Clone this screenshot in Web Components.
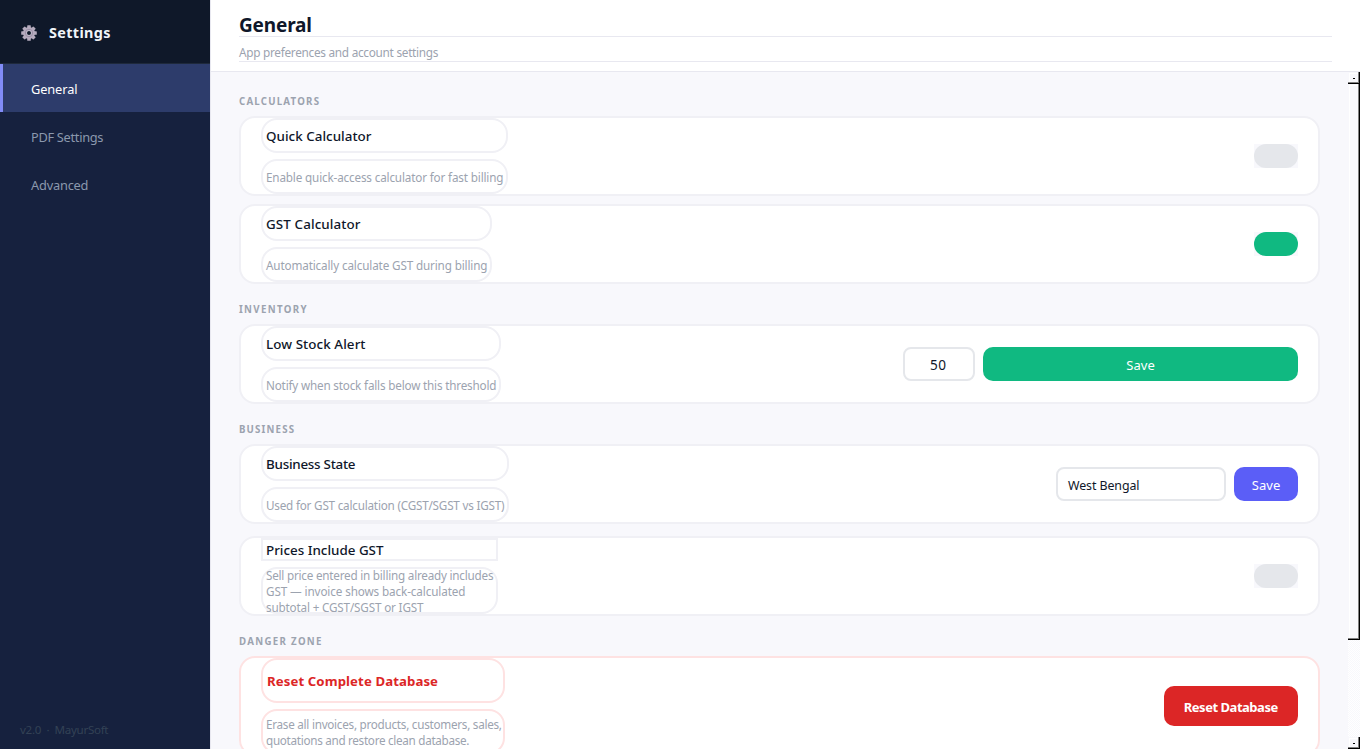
<!DOCTYPE html>
<html lang="en">
<head>
<meta charset="UTF-8">
<title>Settings</title>
<style>
  html, body { margin: 0; height: 100%; overflow: hidden; }
  body { font-family: "Noto Sans", "Open Sans", sans-serif; color: #0f172a; background: #f8f8fc; }
  settings-app { height: 749px; }
</style>
</head>
<body>
<settings-app></settings-app>

<script>
// Text run spaced out to a given advance width
class FitText extends HTMLElement {
  connectedCallback() {
    this.attachShadow({ mode: 'open' });
    this.shadowRoot.innerHTML = `
      <style>
        :host { display: block; white-space: nowrap; }
        span { display: inline-block; }
      </style>
      <span><slot></slot></span>
    `;
    const span = this.shadowRoot.querySelector('span');
    const width = Number(this.getAttribute('width'));
    const count = this.textContent.length;
    if (width && count > 1) {
      const natural = span.getBoundingClientRect().width;
      const gap = (width - natural) / (count - 1);
      span.style.letterSpacing = gap + 'px';
      span.style.marginRight = -gap + 'px';
    }
  }
}

class GearIcon extends HTMLElement {
  connectedCallback() {
    this.attachShadow({ mode: 'open' });
    this.shadowRoot.innerHTML = `
      <style>:host { display: block; width: 16px; height: 16px; } svg { display: block; }</style>
      <svg width="16" height="16" viewBox="0 0 16 16">
        <g fill="#b5abbd">
          <rect x="6.2" y="0.2" width="3.6" height="15.6" rx="0.6"/>
          <rect x="6.2" y="0.2" width="3.6" height="15.6" rx="0.6" transform="rotate(45 8 8)"/>
          <rect x="6.2" y="0.2" width="3.6" height="15.6" rx="0.6" transform="rotate(90 8 8)"/>
          <rect x="6.2" y="0.2" width="3.6" height="15.6" rx="0.6" transform="rotate(135 8 8)"/>
          <circle cx="8" cy="8" r="6"/>
        </g>
        <circle cx="8" cy="8" r="3.7" fill="none" stroke="#978aa3" stroke-width="0.9"/>
        <circle cx="8" cy="8" r="2.5" fill="#0f1829" stroke="#d3ccd9" stroke-width="0.9"/>
      </svg>
    `;
  }
}

class NavItem extends HTMLElement {
  connectedCallback() {
    this.attachShadow({ mode: 'open' });
    this.shadowRoot.innerHTML = `
      <style>
        :host { display: flex; align-items: center; height: 48px; box-sizing: border-box; padding: 3px 0 0 28px; border-left: 3px solid transparent; font-size: 12.8px; line-height: 19px; color: #8b98ad; }
        :host([active]) { background: #2d3c6b; border-left-color: #818cf8; color: #fff; }
      </style>
      <slot></slot>
    `;
  }
}

class SectionLabel extends HTMLElement {
  connectedCallback() {
    this.attachShadow({ mode: 'open' });
    this.shadowRoot.innerHTML = `
      <style>
        :host { display: block; box-sizing: border-box; height: 30px; margin-top: 10px; padding-top: 1px; line-height: 29px; font-size: 9.7px; font-weight: 700; color: #9ca3af; }
        :host([first]) { margin-top: 14px; }
      </style>
      <slot></slot>
    `;
  }
}

class SettingCard extends HTMLElement {
  connectedCallback() {
    this.attachShadow({ mode: 'open' });
    const box = this.getAttribute('box');
    this.shadowRoot.innerHTML = `
      <style>
        :host { --line: #f0f0f5; display: flex; justify-content: space-between; box-sizing: border-box; flex: none; height: 80px; padding: 0 20px; border: 2px solid var(--line); border-radius: 16px; background: #fff; overflow: hidden; }
        :host([danger]) { --line: #fee2e2; height: 100px; }
        .text { display: flex; flex-direction: column; gap: 6px; width: ${box}px; }
        .title, .desc { box-sizing: border-box; display: flex; flex-direction: column; justify-content: center; border: 2px solid var(--line); border-radius: 16px; padding-left: 3px; }
        .title { flex: 0 0 35px; padding-top: 1px; font-size: 13.4px; font-weight: 500; line-height: 18px; }
        .desc { flex: 1; min-height: 0; font-size: 11.7px; line-height: 16px; color: #9ca3af; padding-top: 1px; }
        :host([compact]) .title { flex: 0 0 23px; padding-top: 0; border-radius: 0; }
        :host([compact]) .desc { flex: 0 0 47px; justify-content: flex-start; padding-top: 0; }
        :host([compact]) .desc ::slotted(*) { position: relative; top: -2px; }
        :host([danger]) .title { flex-basis: 45px; color: #dc2626; font-size: 13.2px; font-weight: 700; padding-left: 4px; }
        .action { display: flex; align-items: center; gap: 8px; }
      </style>
      <div class="text">
        <div class="title"><slot name="title"></slot></div>
        <div class="desc"><slot name="desc"></slot></div>
      </div>
      <div class="action"><slot></slot></div>
    `;
  }
}

class ToggleSwitch extends HTMLElement {
  connectedCallback() {
    this.attachShadow({ mode: 'open' });
    this.shadowRoot.innerHTML = `
      <style>
        :host { display: block; width: 44px; height: 24px; background: #f8f8fc; }
        div { height: 100%; border-radius: 12px; background: #e5e7eb; }
        :host([on]) div { background: #10b981; }
      </style>
      <div></div>
    `;
  }
}

class TextField extends HTMLElement {
  connectedCallback() {
    this.attachShadow({ mode: 'open' });
    this.shadowRoot.innerHTML = `
      <style>
        :host { display: flex; align-items: center; box-sizing: border-box; width: 170px; height: 34px; padding: 3px 10px 0; border: 2px solid #e5e7eb; border-radius: 8px; background: #fff; font-size: 12.4px; line-height: 18px; }
        :host([number]) { width: 72px; justify-content: center; padding: 2px 10px 0 8px; font-size: 13.6px; }
      </style>
      <slot></slot>
    `;
  }
}

class ActionButton extends HTMLElement {
  connectedCallback() {
    this.attachShadow({ mode: 'open' });
    this.shadowRoot.innerHTML = `
      <style>
        :host { display: flex; align-items: center; justify-content: center; box-sizing: border-box; width: 64px; height: 34px; padding-top: 1px; border-radius: 10px; background: #5b5ef7; color: #fff; font-size: 13px; line-height: 18px; }
        :host([kind="success"]) { width: 315px; background: #10b981; }
        :host([kind="danger"]) { width: 134px; height: 40px; background: #dc2626; font-weight: 700; }
      </style>
      <slot></slot>
    `;
  }
}

class ScrollBar extends HTMLElement {
  connectedCallback() {
    this.attachShadow({ mode: 'open' });
    this.shadowRoot.innerHTML = `
      <style>
        :host { display: flex; flex-direction: column; width: 12px; background: repeating-conic-gradient(#fff 0 25%, #f8f8fc 0 50%) 0 0 / 2px 2px; }
        div { box-sizing: border-box; background: #f8f8fc; border: solid #000; border-width: 0 1px 1px 0; box-shadow: inset -1px -1px #808080, inset 1px 1px #f8f8fc, inset 2px 2px #fff; }
        .btn { height: 12px; display: flex; align-items: center; justify-content: center; }
        .btn::after { content: ""; width: 2px; height: 1px; margin-top: 2px; background: #000; }
        .thumb { height: 556px; }
        .space { flex: 1; background: none; border: 0; box-shadow: none; }
      </style>
      <div class="btn"></div>
      <div class="thumb"></div>
      <div class="space"></div>
      <div class="btn"></div>
    `;
  }
}

class SettingsApp extends HTMLElement {
  connectedCallback() {
    this.attachShadow({ mode: 'open' });
    this.shadowRoot.innerHTML = `
      <style>
        :host { display: flex; overflow: hidden; }
        aside { flex: none; width: 210px; display: flex; flex-direction: column; background: #16213e; }
        .brand { display: flex; align-items: center; gap: 12px; box-sizing: border-box; height: 64px; padding: 2px 0 0 21px; background: #0f1829; border-bottom: 1px solid #1e293b; color: #f1f5f9; font-size: 14.4px; font-weight: 700; line-height: 21px; }
        .version { margin-top: auto; padding: 0 0 11px 20px; font-size: 11.6px; line-height: 16px; color: #334155; }
        main { flex: 1; min-width: 0; display: flex; flex-direction: column; border-left: 1px solid #e8e8f0; }
        header { box-sizing: border-box; flex: none; height: 72px; padding: 15px 28px 0; background: #fff; border-bottom: 1px solid #e8e8f0; }
        header fit-text { border-bottom: 1px solid #e8e8f0; }
        h1 { margin: 0; font-size: 19px; line-height: 21px; font-weight: 700; }
        .sub { padding-top: 6px; font-size: 11.8px; line-height: 18px; color: #9ca3af; }
        .body { flex: 1; min-height: 0; display: flex; }
        .list { flex: 1; display: flex; flex-direction: column; padding: 0 28px; overflow: hidden; }
        .list > * { flex: none; }
        .gap8 { margin-top: 8px; }
        .gap12 { margin-top: 12px; }
      </style>
      <aside>
        <div class="brand"><gear-icon></gear-icon><fit-text width="61.5">Settings</fit-text></div>
        <nav>
          <nav-item active><fit-text width="46.5">General</fit-text></nav-item>
          <nav-item><fit-text width="72.5">PDF Settings</fit-text></nav-item>
          <nav-item><fit-text width="57.5">Advanced</fit-text></nav-item>
        </nav>
        <div class="version"><fit-text width="88.5">v2.0 &nbsp;·&nbsp; MayurSoft</fit-text></div>
      </aside>
      <main>
        <header>
          <h1><fit-text width="73">General</fit-text></h1>
          <div class="sub"><fit-text width="199.5">App preferences and account settings</fit-text></div>
        </header>
        <div class="body">
          <div class="list">
            <section-label first><fit-text width="80">CALCULATORS</fit-text></section-label>
            <setting-card box="247">
              <fit-text slot="title" width="105.5">Quick Calculator</fit-text>
              <fit-text slot="desc" width="237.5">Enable quick-access calculator for fast billing</fit-text>
              <toggle-switch></toggle-switch>
            </setting-card>
            <setting-card class="gap8" box="231">
              <fit-text slot="title" width="94.5">GST Calculator</fit-text>
              <fit-text slot="desc" width="221.5">Automatically calculate GST during billing</fit-text>
              <toggle-switch on></toggle-switch>
            </setting-card>

            <section-label><fit-text width="67.5">INVENTORY</fit-text></section-label>
            <setting-card box="240">
              <fit-text slot="title" width="99.5">Low Stock Alert</fit-text>
              <fit-text slot="desc" width="230.5">Notify when stock falls below this threshold</fit-text>
              <text-field number><fit-text width="16">50</fit-text></text-field>
              <action-button kind="success"><fit-text width="28.5">Save</fit-text></action-button>
            </setting-card>

            <section-label><fit-text width="55">BUSINESS</fit-text></section-label>
            <setting-card box="248">
              <fit-text slot="title" width="89.5">Business State</fit-text>
              <fit-text slot="desc" width="238.5">Used for GST calculation (CGST/SGST vs IGST)</fit-text>
              <text-field><fit-text width="71.5">West Bengal</fit-text></text-field>
              <action-button><fit-text width="28.5">Save</fit-text></action-button>
            </setting-card>
            <setting-card class="gap12" box="237" compact>
              <fit-text slot="title" width="117.5">Prices Include GST</fit-text>
              <fit-text slot="desc" width="227.5">Sell price entered in billing already includes</fit-text>
              <fit-text slot="desc" width="199.5">GST — invoice shows back-calculated</fit-text>
              <fit-text slot="desc" width="157.5">subtotal + CGST/SGST or IGST</fit-text>
              <toggle-switch></toggle-switch>
            </setting-card>

            <section-label><fit-text width="82.5">DANGER ZONE</fit-text></section-label>
            <setting-card box="244" danger>
              <fit-text slot="title" width="171">Reset Complete Database</fit-text>
              <fit-text slot="desc" width="236">Erase all invoices, products, customers, sales,</fit-text>
              <fit-text slot="desc" width="203.5">quotations and restore clean database.</fit-text>
              <action-button kind="danger"><fit-text width="94.5">Reset Database</fit-text></action-button>
            </setting-card>
          </div>
          <scroll-bar></scroll-bar>
        </div>
      </main>
    `;
  }
}

customElements.define('gear-icon', GearIcon);
customElements.define('nav-item', NavItem);
customElements.define('section-label', SectionLabel);
customElements.define('setting-card', SettingCard);
customElements.define('toggle-switch', ToggleSwitch);
customElements.define('text-field', TextField);
customElements.define('action-button', ActionButton);
customElements.define('scroll-bar', ScrollBar);
customElements.define('settings-app', SettingsApp);
// last, so every host that sets a font size is already in place
customElements.define('fit-text', FitText);
</script>
</body>
</html>
